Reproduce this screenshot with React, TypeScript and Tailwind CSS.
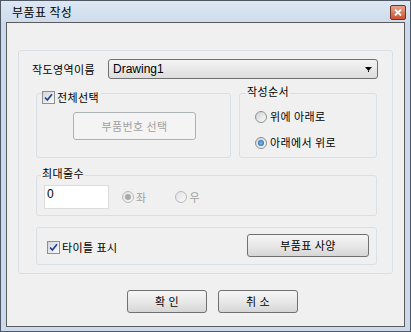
import React from 'react';

const font = "font-['Noto_Sans_CJK_KR','Liberation_Sans',sans-serif] tracking-[0.4px]";

const CheckBox: React.FC = () => (
  <span className="flex h-[13px] w-[13px] shrink-0 items-center justify-center border border-[#8e8f8f] bg-linear-to-br from-[#d2d5da] to-[#fbfbfb]">
    <svg width="9" height="9" viewBox="0 0 9 9">
      <path d="M1 4.5 L3.4 7 L8 1.2" fill="none" stroke="#24409a" strokeWidth="1.7" />
    </svg>
  </span>
);

const Radio: React.FC<{ checked?: boolean; disabled?: boolean }> = ({ checked, disabled }) => (
  <span
    className={
      disabled
        ? 'flex h-[12px] w-[12px] shrink-0 items-center justify-center rounded-full border border-[#b9b9b9] bg-linear-to-br from-[#e2e2e2] to-[#f8f8f8]'
        : 'flex h-[12px] w-[12px] shrink-0 items-center justify-center rounded-full border border-[#8e8f8f] bg-linear-to-br from-[#cfd1d4] to-[#fbfbfb]'
    }
  >
    {checked && (
      <span
        className={
          disabled
            ? 'h-[6px] w-[6px] rounded-full bg-[#a9a9a9]'
            : 'h-[6px] w-[6px] rounded-full bg-radial from-[#7cc6f5] to-[#0f4f9c]'
        }
      />
    )}
  </span>
);

const WinButton: React.FC<{ label: string; className?: string }> = ({ label, className }) => (
  <div
    className={
      'flex items-center justify-center rounded-[3px] border border-[#707070] bg-linear-to-b from-[#f6f6f6] via-[#e8e8e8] to-[#d6d6d6] text-[11px] text-black ' +
      (className ?? '')
    }
  >
    {label}
  </div>
);

export default function App() {
  return (
    <div className={`${font} h-[332px] w-[411px] border border-[#4f5864] bg-[#cad9eb]`}>
      {/* title bar */}
      <div className="flex h-[21px] items-start justify-between bg-linear-to-b from-[#dde7f3] to-[#cfdcec]">
        <span className="mt-[3px] pl-[11px] text-[12px] leading-[15px] text-black">부품표 작성</span>
        <div className="mr-[4px] mt-[4px] flex h-[15px] w-[16px] items-center justify-center rounded-[2px] border border-[#6b3426] bg-linear-to-b from-[#e8a48c] to-[#c9502f]">
          <svg width="8" height="7" viewBox="0 0 8 7">
            <path d="M1 0.5 L7 6.5 M7 0.5 L1 6.5" stroke="#ffffff" strokeWidth="1.8" />
          </svg>
        </div>
      </div>

      {/* client area */}
      <div className="mx-[5px] mb-[4px] h-[305px] border border-[#5b5b5b] bg-[#f0f0f0]">
        <div className="ml-[11px] mt-[27px] w-[375px] rounded-[3px] border border-[#d8e0e6] pb-[8px]">
          {/* drawing area row */}
          <div className="mt-[8px] flex items-center">
            <span className="ml-[13px] w-[76px] text-[11px] text-black">작도영역이름</span>
            <div className="flex h-[20px] w-[270px] items-center justify-between rounded-[3px] border border-[#707070] bg-linear-to-b from-[#f4f4f4] to-[#dddddd] pl-[4px] pr-[5px]">
              <span className="font-['Liberation_Sans',sans-serif] text-[12px] tracking-normal text-black">Drawing1</span>
              <svg width="7" height="5" viewBox="0 0 7 5">
                <path d="M0 0 H7 L3.5 4 Z" fill="#000" />
                <rect x="3" y="4" width="1" height="1" fill="#000" />
              </svg>
            </div>
          </div>

          {/* select all / order */}
          <div className="ml-[17px] mt-[14px] flex gap-[8px]">
            <div className="relative h-[65px] w-[195px] rounded-[3px] border border-[#d8e0e6]">
              <div className="absolute left-[5px] top-[-3px] flex items-center gap-[2px] bg-[#f0f0f0] pr-[2px]">
                <CheckBox />
                <span className="text-[11px] leading-[13px] text-black">전체선택</span>
              </div>
              <div className="ml-[36px] mt-[18px] flex h-[28px] w-[123px] items-center justify-center rounded-[3px] border border-[#adb2b5] bg-[#f4f4f4] text-[11px] text-[#a0a0a0]">
                부품번호 선택
              </div>
            </div>
            <div className="relative h-[65px] w-[138px] rounded-[3px] border border-[#d8e0e6]">
              <span className="absolute left-[6px] top-[-10px] bg-[#f0f0f0] px-[1px] text-[11px] leading-[14px] text-black">
                작성순서
              </span>
              <div className="ml-[15px] mt-[16px] flex items-center gap-[3px]">
                <Radio />
                <span className="text-[11px] leading-[13px] text-black">위에 아래로</span>
              </div>
              <div className="ml-[15px] mt-[13px] flex items-center gap-[3px]">
                <Radio checked />
                <span className="text-[11px] leading-[13px] text-black">아래에서 위로</span>
              </div>
            </div>
          </div>

          {/* max rows */}
          <div className="relative ml-[17px] mt-[17px] h-[41px] w-[341px] rounded-[3px] border border-[#d8e0e6]">
            <span className="absolute left-[4px] top-[-10px] bg-[#f0f0f0] px-[1px] text-[11px] leading-[14px] text-black">
              최대줄수
            </span>
            <div className="ml-[7px] mt-[9px] flex items-center">
              <div className="h-[24px] w-[65px] border border-[#dcdcdc] bg-white pl-[2px] pt-[1px] font-['Liberation_Sans',sans-serif] text-[12px] leading-[15px] text-black">
                0
              </div>
              <div className="ml-[13px] flex items-center gap-[2px]">
                <Radio checked disabled />
                <span className="text-[11px] text-[#a0a0a0]">좌</span>
              </div>
              <div className="ml-[28px] flex items-center gap-[3px]">
                <Radio disabled />
                <span className="text-[11px] text-[#a0a0a0]">우</span>
              </div>
            </div>
          </div>

          {/* title display */}
          <div className="ml-[17px] mt-[11px] flex h-[38px] w-[341px] items-start rounded-[3px] border border-[#d8e0e6]">
            <div className="ml-[10px] mt-[13px] flex items-center gap-[2px]">
              <CheckBox />
              <span className="text-[11px] leading-[13px] text-black">타이틀 표시</span>
            </div>
            <WinButton label="부품표 사양" className="ml-auto mr-[7px] mt-[6px] h-[23px] w-[122px]" />
          </div>
        </div>

        {/* ok / cancel */}
        <div className="ml-[120px] mt-[16px] flex gap-[11px]">
          <WinButton label="확 인" className="h-[23px] w-[80px]" />
          <WinButton label="취 소" className="h-[23px] w-[80px]" />
        </div>
      </div>
    </div>
  );
}
